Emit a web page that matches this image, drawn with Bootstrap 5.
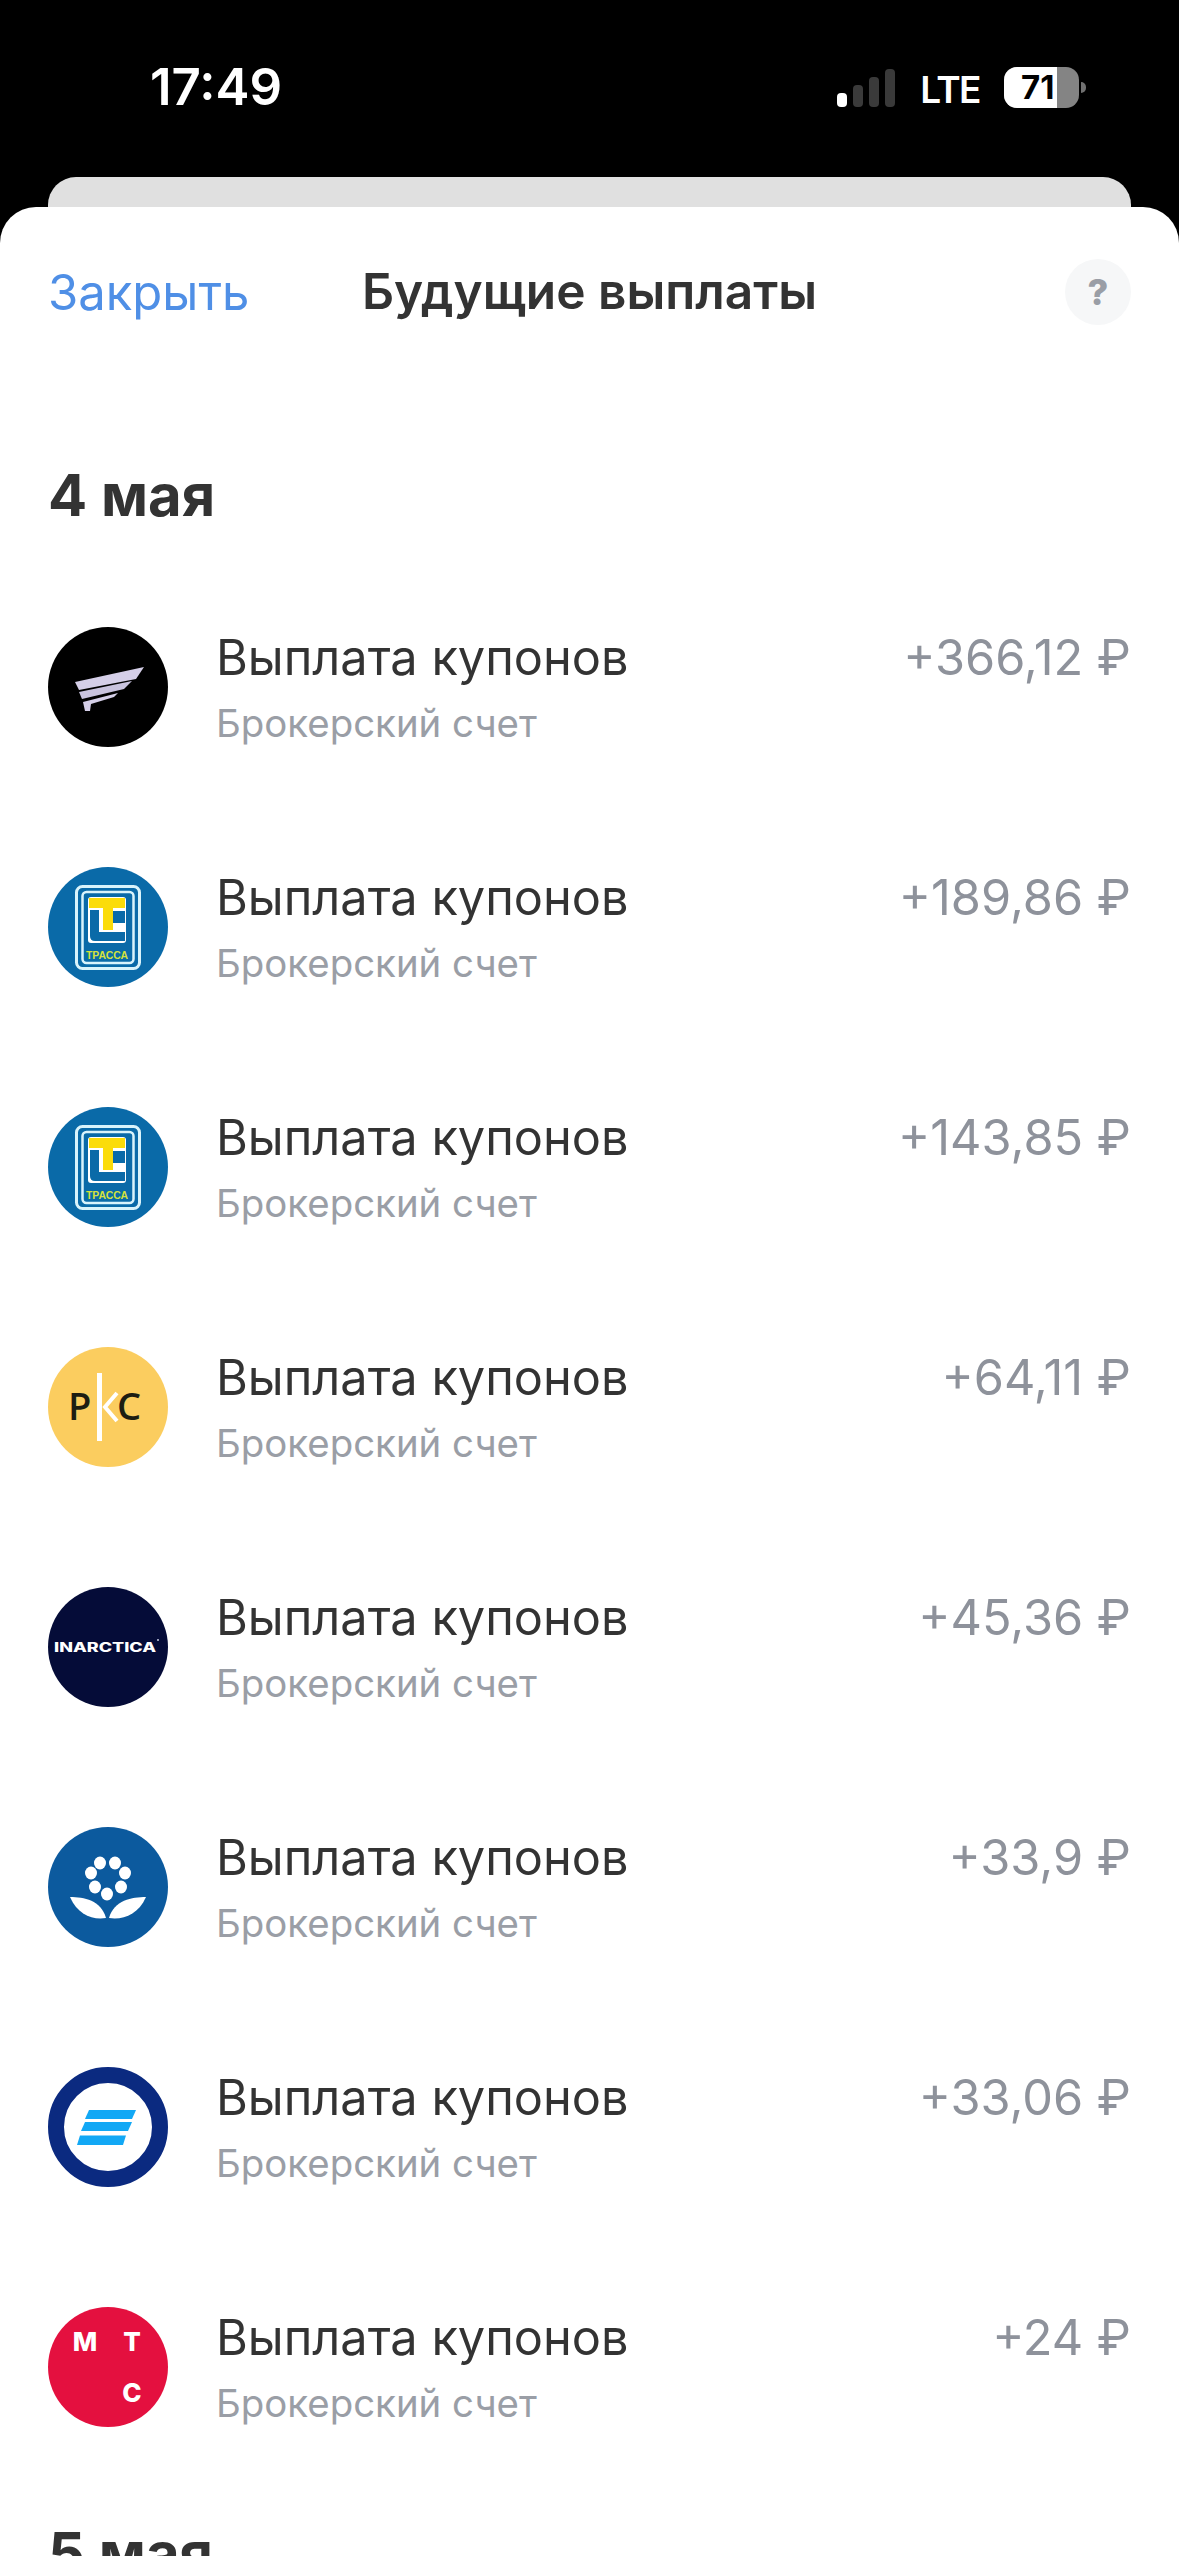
<!DOCTYPE html>
<html lang="ru">

<head>
    <title>Будущие выплаты</title>
    <meta charset="utf-8">
    <meta name="viewport" content="width=device-width, initial-scale=1">
    <link href="https://cdn.jsdelivr.net/npm/bootstrap@5.3.3/dist/css/bootstrap.min.css" rel="stylesheet">
    <script src="https://cdn.jsdelivr.net/npm/bootstrap@5.3.3/dist/js/bootstrap.bundle.min.js"></script>
    <style>
        html, body {
            height: 100%;
        }

        body {
            background: #000;
            font-family: "Inter", "Liberation Sans", sans-serif;
            color: #333;
            overflow: hidden;
        }

        /* Status bar */
        .status-line {
            height: 177px;
            padding: 62px 48px 0 150px;
            color: #fff;
        }

        .clock {
            font-size: 51px;
            font-weight: 600;
            line-height: 50px;
        }

        .status-right {
            margin-top: 5px;
        }

        .lte-label {
            font-size: 37px;
            font-weight: 600;
            line-height: 1;
            letter-spacing: -1.500px;
            margin: 0 24px 0 25px;
            padding-top: 3px;
        }

        .batt {
            width: 75px;
            height: 41px;
            border-radius: 13px;
            overflow: hidden;
            background: #848484;
        }

        .batt-fill {
            width: 53px;
            background: #fff;
        }

        .batt-num {
            font-size: 33px;
            font-weight: 700;
            color: #000;
            line-height: 41px;
            left: 17px;
            top: 0;
        }

        .batt-tip {
            width: 5px;
            height: 11px;
            margin: 0 45px 0 2px;
            border-radius: 0 5px 5px 0;
            background: #707070;
        }

        /* Sheets */
        .back-sheet {
            height: 30px;
            margin: 0 48px;
            background: #e0e0e0;
            border-radius: 28px 28px 0 0;
        }

        .front-sheet {
            background: #fff;
            height: 2400px;
            border-radius: 36px 36px 0 0;
            padding: 0 48px;
        }

        .sheet-head {
            height: 170px;
        }

        .close-link {
            font-size: 49px;
            color: #4f8fe6;
            text-decoration: none;
            line-height: 1;
        }

        .sheet-title {
            font-size: 49.600px;
            font-weight: 600;
            line-height: 1;
            left: 314px;
            top: 50%;
            transform: translateY(-50%);
        }

        .help-btn {
            width: 66px;
            height: 66px;
            background: #f6f7f8;
            color: #9a9ea6;
            font-size: 36px;
            font-weight: 800;
            border: 0;
            padding: 0;
            line-height: 1;
        }

        .day-title {
            font-size: 58px;
            font-weight: 700;
            line-height: 68px;
            margin: 0;
        }

        .day-head {
            padding: 84px 0 0;
            height: 190px;
        }

        .day-next {
            padding-top: 32px;
        }

        .pay-row {
            height: 240px;
        }

        .pay-logo {
            width: 120px;
            height: 120px;
            flex: none;
            margin-right: 48px;
        }

        .pay-name {
            font-size: 48.700px;
            line-height: 58px;
        }

        .pay-sub {
            font-size: 38.400px;
            line-height: 44px;
            color: #9a9ea6;
            margin-top: 14px;
        }

        .pay-sum {
            font-size: 48.700px;
            line-height: 58px;
            color: #8e929b;
        }
    </style>
</head>

<body>

    <!-- Status bar -->
    <div class="status-line d-flex justify-content-between align-items-start">
        <div class="clock">17:49</div>
        <div class="status-right d-flex align-items-center">
            <svg width="58" height="38" viewBox="0 0 58 38">
                <rect x="0" y="24" width="10" height="14" rx="4" fill="#fff" />
                <rect x="16" y="16" width="10" height="22" rx="4" fill="#3a3a3a" />
                <rect x="32" y="8" width="10" height="30" rx="4" fill="#3a3a3a" />
                <rect x="48" y="0" width="10" height="38" rx="4" fill="#3a3a3a" />
            </svg>
            <span class="lte-label">LTE</span>
            <div class="batt d-flex position-relative">
                <div class="batt-fill"></div>
                <span class="batt-num position-absolute">71</span>
            </div>
            <div class="batt-tip"></div>
        </div>
    </div>

    <div class="back-sheet"></div>

    <div class="front-sheet">
        <!-- Header -->
        <div class="sheet-head d-flex justify-content-between align-items-center position-relative">
            <a href="#" class="close-link">Закрыть</a>
            <div class="sheet-title position-absolute">Будущие выплаты</div>
            <button type="button" class="help-btn rounded-circle d-flex align-items-center justify-content-center">?</button>
        </div>

        <div class="day-head">
            <h2 class="day-title">4 мая</h2>
        </div>

        <!-- Payments -->
        <div class="pay-row d-flex align-items-center">
            <svg class="pay-logo" viewBox="0 0 120 120">
                <circle cx="60" cy="60" r="60" fill="#000" />
                <path d="M27 55 96 40 88 52 31 63Z" fill="#d5cfe8" />
                <path d="M31 65 84 54 76 62 34 72Z" fill="#c9c3de" />
                <path d="M35 75 70 66 66 70 43 77 42 84 37 84Z" fill="#d5cfe8" />
            </svg>
            <div class="flex-grow-1">
                <div class="d-flex justify-content-between">
                    <div class="pay-name">Выплата купонов</div>
                    <div class="pay-sum">+366,12 ₽</div>
                </div>
                <div class="pay-sub">Брокерский счет</div>
            </div>
        </div>

        <div class="pay-row d-flex align-items-center">
            <svg class="pay-logo" viewBox="0 0 120 120">
                <use href="#trassaLogo" />
            </svg>
            <div class="flex-grow-1">
                <div class="d-flex justify-content-between">
                    <div class="pay-name">Выплата купонов</div>
                    <div class="pay-sum">+189,86 ₽</div>
                </div>
                <div class="pay-sub">Брокерский счет</div>
            </div>
        </div>

        <div class="pay-row d-flex align-items-center">
            <svg class="pay-logo" viewBox="0 0 120 120">
                <use href="#trassaLogo" />
            </svg>
            <div class="flex-grow-1">
                <div class="d-flex justify-content-between">
                    <div class="pay-name">Выплата купонов</div>
                    <div class="pay-sum">+143,85 ₽</div>
                </div>
                <div class="pay-sub">Брокерский счет</div>
            </div>
        </div>

        <div class="pay-row d-flex align-items-center">
            <svg class="pay-logo" viewBox="0 0 120 120">
                <circle cx="60" cy="60" r="60" fill="#fbcd5f" />
                <rect x="49" y="26" width="5" height="68" fill="#fff" />
                <path d="M69 46 57 60 69 74" fill="none" stroke="#fff" stroke-width="4" />
                <text x="20" y="73" font-family="Open Sans, sans-serif" font-weight="600" font-size="38" fill="#1d1d12">P</text>
                <text x="69" y="73" font-family="Open Sans, sans-serif" font-weight="600" font-size="38" fill="#1d1d12">C</text>
            </svg>
            <div class="flex-grow-1">
                <div class="d-flex justify-content-between">
                    <div class="pay-name">Выплата купонов</div>
                    <div class="pay-sum">+64,11 ₽</div>
                </div>
                <div class="pay-sub">Брокерский счет</div>
            </div>
        </div>

        <div class="pay-row d-flex align-items-center">
            <svg class="pay-logo" viewBox="0 0 120 120">
                <circle cx="60" cy="60" r="60" fill="#050c38" />
                <text x="6" y="64.500" textLength="102" lengthAdjust="spacingAndGlyphs" font-family="Inter, sans-serif" font-weight="800" font-size="12.500" fill="#fff">INARCTICA</text>
                <circle cx="110" cy="53" r="1" fill="#c8cbe0" />
            </svg>
            <div class="flex-grow-1">
                <div class="d-flex justify-content-between">
                    <div class="pay-name">Выплата купонов</div>
                    <div class="pay-sum">+45,36 ₽</div>
                </div>
                <div class="pay-sub">Брокерский счет</div>
            </div>
        </div>

        <div class="pay-row d-flex align-items-center">
            <svg class="pay-logo" viewBox="0 0 120 120">
                <circle cx="60" cy="60" r="60" fill="#0c5a9e" />
                <g fill="#fff">
                    <ellipse cx="52" cy="36" rx="6" ry="6.500" />
                    <ellipse cx="67" cy="36" rx="6" ry="6.500" />
                    <ellipse cx="43" cy="46" rx="6" ry="6.500" />
                    <ellipse cx="77" cy="46" rx="6" ry="6.500" />
                    <ellipse cx="47" cy="60" rx="6" ry="6.500" />
                    <ellipse cx="73" cy="60" rx="6" ry="6.500" />
                    <ellipse cx="59" cy="67" rx="6" ry="6.500" />
                    <path d="M22 70C36 70 53 73 58 91 44 93 30 88 22 70Z" />
                    <path d="M98 70C84 70 66 73 61 91 75 93 90 88 98 70Z" />
                </g>
            </svg>
            <div class="flex-grow-1">
                <div class="d-flex justify-content-between">
                    <div class="pay-name">Выплата купонов</div>
                    <div class="pay-sum">+33,9 ₽</div>
                </div>
                <div class="pay-sub">Брокерский счет</div>
            </div>
        </div>

        <div class="pay-row d-flex align-items-center">
            <svg class="pay-logo" viewBox="0 0 120 120">
                <circle cx="60" cy="60" r="52" fill="#fff" stroke="#0b2a80" stroke-width="16" />
                <path d="M41 43H88L84 52H37Z" fill="#12a8f5" />
                <path d="M37 55H84L80 64H33Z" fill="#12a8f5" />
                <path d="M32 68.500H78L75 78H29Z" fill="#12a8f5" />
            </svg>
            <div class="flex-grow-1">
                <div class="d-flex justify-content-between">
                    <div class="pay-name">Выплата купонов</div>
                    <div class="pay-sum">+33,06 ₽</div>
                </div>
                <div class="pay-sub">Брокерский счет</div>
            </div>
        </div>

        <div class="pay-row d-flex align-items-center">
            <svg class="pay-logo" viewBox="0 0 120 120">
                <circle cx="60" cy="60" r="60" fill="#e4103f" />
                <g font-family="Inter, sans-serif" font-weight="800" font-size="26" fill="#fff" text-anchor="middle">
                    <text x="37" y="44">М</text>
                    <text x="84" y="44">Т</text>
                    <text x="84" y="95">С</text>
                </g>
            </svg>
            <div class="flex-grow-1">
                <div class="d-flex justify-content-between">
                    <div class="pay-name">Выплата купонов</div>
                    <div class="pay-sum">+24 ₽</div>
                </div>
                <div class="pay-sub">Брокерский счет</div>
            </div>
        </div>

        <div class="day-head day-next">
            <h2 class="day-title">5 мая</h2>
        </div>
    </div>

    <!-- Shared logo -->
    <svg width="0" height="0" class="position-absolute">
        <defs>
            <g id="trassaLogo">
                <circle cx="60" cy="60" r="60" fill="#0a6aa8" />
                <rect x="28.500" y="19.500" width="63" height="82" rx="6" fill="none" stroke="#d9f3fb" stroke-width="3" />
                <rect x="34.500" y="25" width="51" height="71" rx="4" fill="none" stroke="#d9f3fb" stroke-width="2.500" />
                <rect x="40" y="30" width="38" height="46" rx="3" fill="#fff" />
                <path d="M42 43H51V65H77V74H47Q42 74 42 69Z" fill="#0a6aa8" />
                <path d="M65 44H77V56H65Z" fill="#0a6aa8" />
                <path d="M41 31H77V41H65V63H55V41H41Z" fill="#fbdc0a" />
                <text x="38" y="92" textLength="42" lengthAdjust="spacingAndGlyphs" font-family="Liberation Sans, sans-serif" font-weight="700" font-size="11" fill="#d4e23c">ТРАССА</text>
            </g>
        </defs>
    </svg>

</body>

</html>
